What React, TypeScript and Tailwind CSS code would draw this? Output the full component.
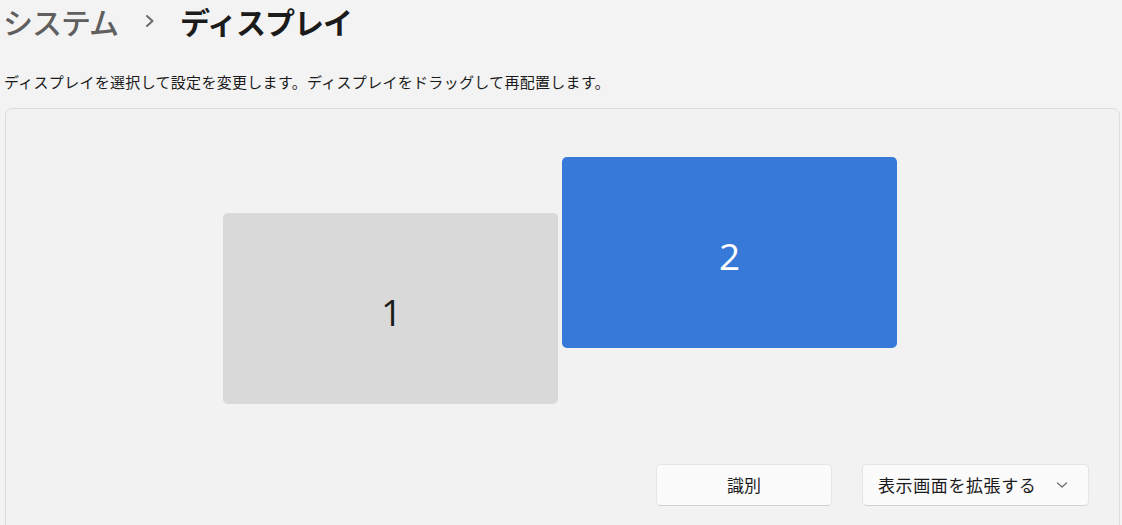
import React from "react";

export default function App() {
  return (
    <div className="w-[1122px] h-[525px] overflow-hidden bg-[#f3f3f3] font-['Noto_Sans_CJK_JP','Noto_Sans',sans-serif]">
      <div className="flex items-center h-[42px] pl-[3px]">
        <span className="text-[30px] tracking-[-1px] font-medium text-[#5f5f5f] leading-none">システム</span>
        <svg className="ml-[26px] mr-[24px]" width="12" height="14" viewBox="0 0 12 14" fill="none">
          <path d="M3 2 L8.5 7 L3 12" stroke="#6a6a6a" strokeWidth="2" strokeLinecap="round" strokeLinejoin="round" />
        </svg>
        <span className="text-[30px] tracking-[-1px] font-bold text-[#1b1b1b] leading-none">ディスプレイ</span>
      </div>
      <div className="mt-[30px] pl-[4px] text-[15px] tracking-[0.3px] leading-[20px] text-[#1b1b1b]">
        ディスプレイを選択して設定を変更します。ディスプレイをドラッグして再配置します。
      </div>
      <div className="mt-[16px] ml-[5px] w-[1115px] h-[440px] rounded-[7px] border border-[#dcdcdc] bg-[#f2f2f2] flex flex-col">
        <div className="relative h-[355px]">
          <div className="absolute left-[217px] top-[104px] w-[335px] h-[191px] rounded-[5px] bg-[#d9d9d9] flex items-center justify-center">
            <span className="pt-[6px] pl-[2px] text-[37px] leading-none text-[#1b1b1b] font-['Open_Sans',sans-serif]">1</span>
          </div>
          <div className="absolute left-[556px] top-[48px] w-[335px] h-[191px] rounded-[5px] bg-[#3779d9] flex items-center justify-center">
            <span className="pt-[6px] text-[37px] leading-none text-white font-['Open_Sans',sans-serif]">2</span>
          </div>
        </div>
        <div className="flex justify-end gap-[30px] pr-[30px]">
          <button className="w-[176px] h-[42px] rounded-[5px] bg-[#fbfbfb] border border-[#e5e5e5] border-b-[#d0d0d0] text-[17px] text-[#1b1b1b] flex items-center justify-center">
            識別
          </button>
          <button className="w-[227px] h-[42px] rounded-[5px] bg-[#fbfbfb] border border-[#e5e5e5] border-b-[#d0d0d0] text-[17px] tracking-[0.6px] text-[#1b1b1b] flex items-center pl-[15px]">
            <span>表示画面を拡張する</span>
            <svg className="ml-[20px]" width="12" height="8" viewBox="0 0 12 8" fill="none">
              <path d="M1.5 2 L6 6 L10.5 2" stroke="#6a6a6a" strokeWidth="1.2" strokeLinecap="round" strokeLinejoin="round" />
            </svg>
          </button>
        </div>
      </div>
    </div>
  );
}
